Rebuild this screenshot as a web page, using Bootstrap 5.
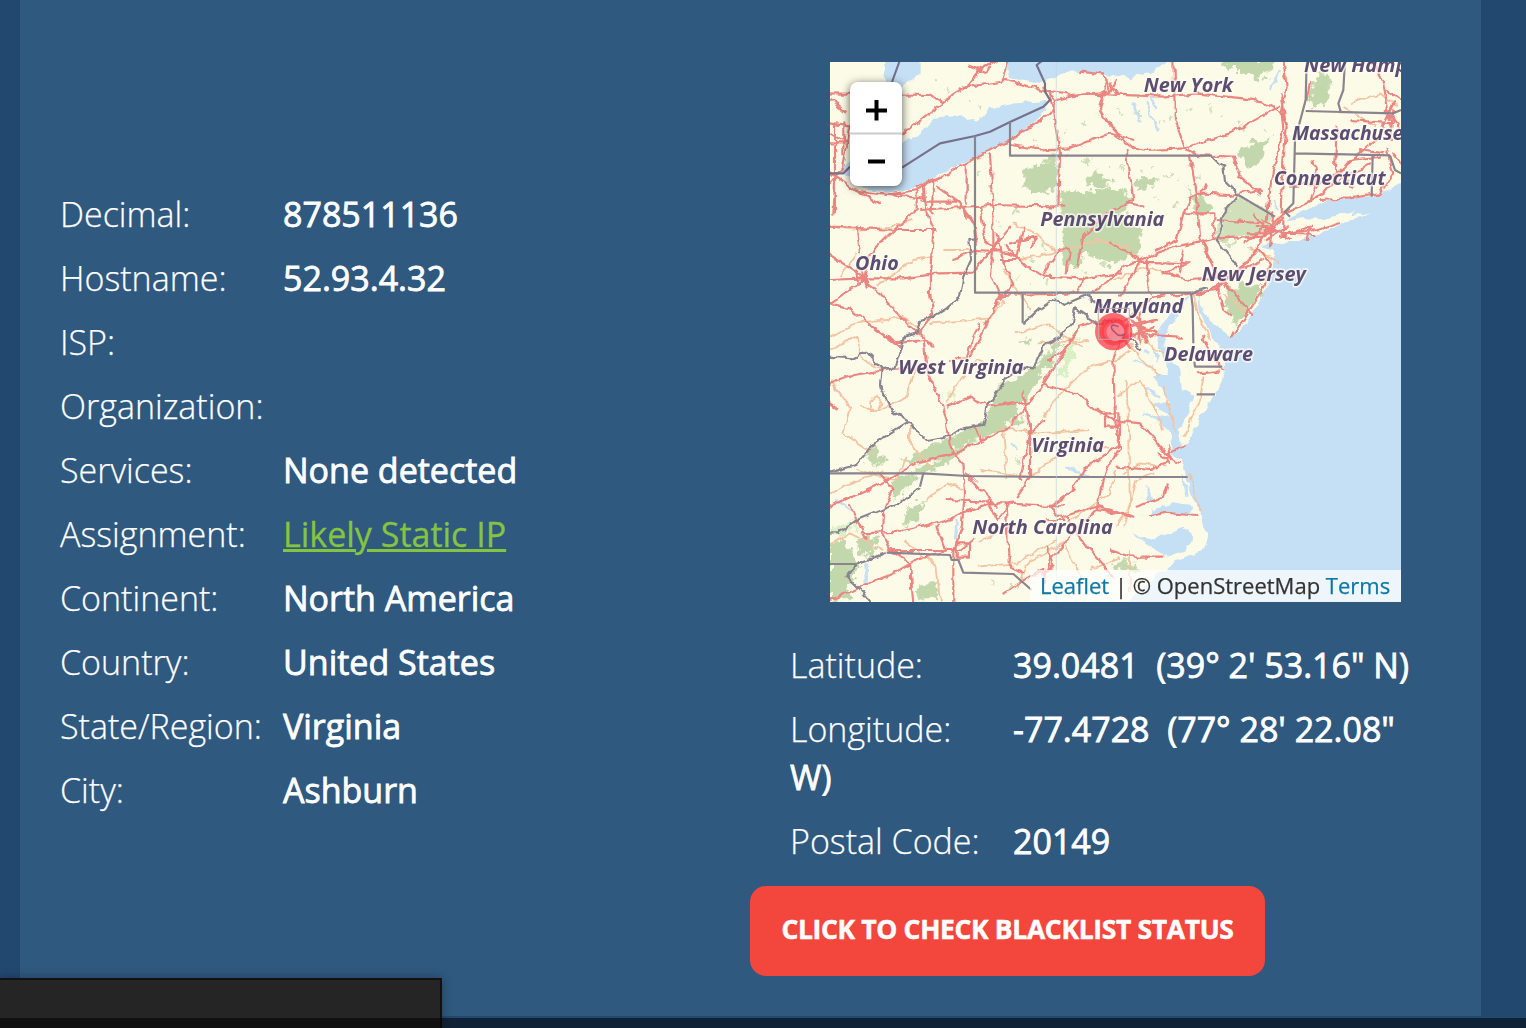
<!DOCTYPE html>
<html lang="en">
<head>
<meta charset="utf-8">
<meta name="viewport" content="width=device-width, initial-scale=1">
<title>IP Details</title>
<link href="https://cdn.jsdelivr.net/npm/bootstrap@5.3.0/dist/css/bootstrap.min.css" rel="stylesheet">
<style>
body{font-family:"Open Sans",sans-serif;background:#234870;color:#fff;width:1526px;height:1028px;overflow:hidden;position:relative}
.panel{width:1461px;height:1016px;margin-left:20px;background:#2f597f}
.facts{width:730px;padding:190px 40px 0}
.geo{width:731px}
.fact{font-size:34px;line-height:48px;margin-bottom:16px;-webkit-text-stroke:.8px currentColor}
.fact>span:first-child{display:inline-block;width:223px;font-weight:300;white-space:nowrap;-webkit-text-stroke-width:.25px}
.fact a{color:#85c441;-webkit-text-stroke-width:.3px}
.mapbox{width:571px;height:540px;margin:62px 80px 39px;position:relative;overflow:hidden;background:#fcfbe7}
.mapbox>svg{display:block;width:571px;height:540px}
.coords{padding:0 40px}
.zoomer{position:absolute;left:20px;top:20px;width:52px;height:104px;border-radius:8px;background:#fff;box-shadow:0 2px 10px rgba(0,0,0,.65)}
.zoomer svg{display:block}
.credit{position:absolute;right:0;bottom:0;width:371px;height:32px;padding-left:10px;background:rgba(255,255,255,.7);color:#333;font-size:22px;line-height:30px;white-space:nowrap;-webkit-text-stroke:.25px currentColor}
.credit a{color:#0f78a4;text-decoration:none}
.btn.check{width:515px;height:90px;border-radius:16px;background:#f3463d;color:#fff;border:0;font-size:26.5px;font-weight:700;padding:0 0 2px;margin-top:5px;white-space:nowrap;letter-spacing:-.35px;-webkit-text-stroke:.5px #fff}
.tray{position:absolute;left:-2px;top:978px;width:444px;height:60px;background:#252525;border:2px solid #111;box-shadow:0 0 10px rgba(0,0,0,.3)}
.footbar{position:absolute;left:0;top:1018px;width:1526px;height:10px;background:rgba(0,0,0,.52)}
.lb{font:italic 700 61px "Open Sans",sans-serif;fill:#5d4e72;stroke:#fffdf6;stroke-width:10px;stroke-linejoin:round;stroke-opacity:.7;paint-order:stroke}
.wt{fill:#c5dff4}
.ld{fill:#fcfbe7}
.gr{fill:#c3d7ac}
.rd{fill:none;stroke:#ea8581;stroke-width:6.5;stroke-linejoin:round;stroke-linecap:round}
.mn{fill:none;stroke:#f3c3a2;stroke-width:5.5;stroke-linejoin:round}
.bd{fill:none;stroke:#8b8490;stroke-width:6.5;stroke-linejoin:round}
</style>
</head>
<body>
<div class="panel d-flex">
  <div class="facts">
    <div class="fact"><span>Decimal:</span><span>878511136</span></div>
    <div class="fact"><span>Hostname:</span><span>52.93.4.32</span></div>
    <div class="fact"><span>ISP:</span></div>
    <div class="fact"><span>Organization:</span></div>
    <div class="fact"><span>Services:</span><span>None detected</span></div>
    <div class="fact"><span>Assignment:</span><a href="#">Likely Static IP</a></div>
    <div class="fact"><span>Continent:</span><span>North America</span></div>
    <div class="fact"><span>Country:</span><span>United States</span></div>
    <div class="fact"><span>State/Region:</span><span>Virginia</span></div>
    <div class="fact"><span>City:</span><span>Ashburn</span></div>
  </div>
  <div class="geo">
    <div class="mapbox">
      <svg viewBox="0 6 1713 1620" preserveAspectRatio="none">
        <defs>
          <filter id="rough" x="0" y="0" width="1740" height="1640" filterUnits="userSpaceOnUse"><feTurbulence type="fractalNoise" baseFrequency=".035" numOctaves="2" seed="4"/><feDisplacementMap in="SourceGraphic" scale="20" xChannelSelector="R" yChannelSelector="G"/><feGaussianBlur stdDeviation="1.9"/></filter>
          <filter id="ragged" x="0" y="0" width="1740" height="1640" filterUnits="userSpaceOnUse"><feTurbulence type="fractalNoise" baseFrequency=".04" numOctaves="4" seed="9"/><feDisplacementMap in="SourceGraphic" scale="48" xChannelSelector="R" yChannelSelector="G"/><feGaussianBlur stdDeviation="2"/></filter>
          <filter id="soft" x="0" y="0" width="1740" height="1640" filterUnits="userSpaceOnUse"><feGaussianBlur stdDeviation="1.6"/></filter>
        </defs>
        <!-- forests -->
        <g class="gr" filter="url(#ragged)">
          <path d="M600 320L645 315 650 290 680 290 685 375 650 405 620 390 580 390 585 345Z"/>
          <path d="M692 385L780 395 870 385 900 430 880 470 940 520 925 580 840 615 770 580 740 620 695 610 700 500 692 450Z"/>
          <path d="M760 350L790 350 805 320 815 350 845 365 830 385 770 380Z"/>
          <path d="M1180 0L1345 0 1330 35 1275 60 1240 30 1190 30ZM1450 60L1480 30 1505 60 1480 130 1440 150ZM1230 265L1320 230 1300 290 1260 330 1230 290ZM910 370L970 350 980 370 920 390ZM1090 400L1150 440 1130 460 1085 455Z"/>
          <path opacity=".75" d="M1225 410L1320 455 1330 500 1270 530 1165 545 1170 470Z"/>
          <path d="M1190 680L1290 670 1300 700 1260 740 1220 800 1190 740Z"/>
          <path d="M700 825L640 890 580 940 510 975 465 1080 410 1110 340 1140 210 1205 240 1215 340 1190 250 1235 280 1240 360 1200 380 1175 440 1140 520 1110 560 1050 590 1010 630 950 680 880Z"/>
          <path d="M110 1200L125 1155 150 1190 180 1200 130 1220ZM190 1260L270 1230 200 1320 180 1310ZM230 1350L290 1320 270 1370 220 1400ZM80 1440L150 1430 120 1490 90 1480ZM0 1450L40 1440 90 1520 50 1570 70 1620 0 1620ZM260 1580L320 1560 325 1620 270 1620ZM540 1080L590 1070 560 1100ZM570 840L600 835 595 860ZM850 1500L930 1515 910 1530 850 1530Z"/>
          <path fill="#d9efc4" d="M685 960L720 850 745 830 710 940ZM350 990L385 1010 370 1030ZM0 1400L80 1385 70 1420 0 1425Z"/>
        </g>
        <!-- small woods scattered over the hills -->
        <path filter="url(#ragged)" fill="none" stroke="#c3d7ac" stroke-width="10" stroke-dasharray="9 46 16 60 5 33" opacity=".75" d="M300 60L480 150 450 190M700 210L900 150 1000 180 1120 130 1240 200 1380 240M570 200L640 270 900 330 1060 360 1150 350M650 560L560 650 630 680 760 640 900 590 1000 560M960 320L1100 390 1040 440 960 410M1200 550L1270 570M500 490L600 430M440 340L520 430M560 1200L720 1120M480 1570L550 1580"/>
        <!-- lakes and sea -->
        <g filter="url(#rough)">
          <path class="wt" d="M162 -20L275 -20 275 40 230 70 185 100 165 80Z"/>
          <path class="wt" d="M30 335L60 300 80 255 250 240 310 180 355 165 400 170 445 185 480 145 560 130 660 122 650 150 620 180 540 240 480 270 410 305 330 340 270 380 170 400 110 385 60 350Z"/>
          <path class="wt" d="M525 -20L1045 -20 970 35 900 55 850 45 760 35 700 40 620 70 540 55Z"/>
          <path class="wt" d="M1740 350L1690 385 1630 410 1540 418 1480 425 1430 450 1385 470 1350 500 1300 560 1330 575 1325 625 1310 680 1280 740 1240 800 1200 835 1180 810 1140 780 1110 735 1102 690 1105 740 1130 800 1145 830 1170 860 1185 915 1175 965 1140 1025 1105 1085 1075 1145 1052 1158 1050 1110 1075 1055 1090 1005 1055 985 1050 925 1020 895 1000 855 1020 795 1060 745 1080 700 1040 740 1010 775 980 820 990 860 1000 895 1015 945 970 945 1020 1025 960 1035 1020 1065 970 1075 1020 1115 1025 1185 1055 1195 1065 1235 1080 1295 1115 1365 1130 1435 1120 1470 1040 1505 980 1545 940 1585 870 1640 1740 1640Z"/>
          <path class="wt" d="M960 1350L1030 1330 1090 1340 1080 1365 1010 1350 960 1370ZM905 1420L960 1440 1060 1400 1090 1430 1070 1470 1010 1490 940 1445ZM1050 1230L1080 1310 1065 1310ZM950 1270L975 1330 950 1320ZM970 860L990 890 980 910Z"/>
          <path class="ld" d="M1340 520L1365 485 1420 475 1480 478 1530 465 1575 450 1560 470 1620 457 1540 492 1460 522 1400 545 1310 550Z"/>
          <path fill="none" stroke="#c5dff4" stroke-width="7" d="M910 130L930 190M950 120L960 170 990 210M960 100L980 150M1350 30L1320 90M1330 420L1340 450M960 880L940 870M970 920L910 900M990 1010L940 980M990 1080L940 1060M15 980L30 1000M20 1320L60 1350M380 1380L375 1440M545 1150L565 1170M700 1220L780 1250M110 1510L110 1570M410 350L410 400"/>
        </g>
        <!-- minor roads -->
        <g class="mn" filter="url(#rough)">
          <path d="M0 500L80 510 180 500 250 480M140 680L250 600 310 590M300 790L480 775 520 720M0 830L80 790 220 770 260 800M30 650L80 580M550 490L620 520 680 580M560 600L660 580 800 540 900 560M340 570L420 570M520 630L600 750M560 820L650 790 700 830 760 860"/>
          <path d="M0 870L80 830 100 900 150 930M0 960L60 1040 40 1120 130 1180M90 1040L150 1050 230 1010 260 910M120 1030L140 1010 155 1030 145 1050 120 1050ZM350 1030L390 960 440 900 520 930M240 1090L240 1150 300 1220M500 1100L620 1120 780 1110M520 1110L530 1260M640 1070L700 990 780 920 860 900 900 870M450 1230L600 1250 690 1180 840 1160M80 1230L200 1260 230 1190M0 1300L160 1230M290 1320L350 1270 400 1290M440 1520L560 1510 680 1440M440 1450L500 1420M560 1590L600 1500 700 1450 760 1560M0 1450L60 1420 160 1470M220 1440L320 1520 330 1626M700 1400L840 1300 860 1230M780 1530L870 1490M620 850L780 840"/>
          <path d="M860 1010L930 960 980 1060 1000 1110M890 960L900 1340 860 1400M880 1240L930 1210 1010 1220M880 1400L920 1260 970 1240M900 1470L900 1590M1000 980L1040 1120M1090 700L1110 780 1140 840M1100 940L1170 930M1120 950L1110 1020 1060 1130M1080 1240L1110 1350M1180 700L1250 760M900 820L1000 880M900 850L940 900 990 950M1560 130L1650 100 1700 140M1540 140L1640 200M1260 560L1350 610M850 660L950 620 1040 650"/>
        </g>
        <!-- main roads -->
        <g class="rd" filter="url(#rough)">
          <path d="M-10 100L300 105 340 125 410 80 450 30 500 0M220 220L340 125M400 80L530 60 650 95 720 105 840 95 860 60M420 20L470 40 480 20M540 0L520 60M750 32L820 40 840 90M830 60L810 150 830 185 870 220M0 190L60 200 40 320 0 370M0 220L50 250 0 250M15 190L15 460M0 120L50 160M40 190L40 280"/>
          <path d="M0 340L70 390 170 405 260 390 410 310 540 240 660 160 680 120 640 80M15 370L10 470M60 385L150 430M80 395L280 415M260 385L260 450 120 580 100 660M280 370L290 460 310 510 300 640 300 700 310 760 260 825M310 360L305 460M260 380L330 350M270 450L480 435 700 440M280 425L380 425 430 480 440 580M410 310L410 430M480 285L490 430 490 560M660 100L690 280 685 440M540 255L630 268 720 265 840 220 910 240M450 435L465 540 500 570 560 590M0 500L200 510 320 510M320 380L390 430 410 470"/>
          <path d="M0 660L100 655 220 655 330 640 430 638 480 570 540 500M80 500L90 580M85 640L120 670M90 670L110 645M100 660L0 730 60 745 130 800 210 860M0 585L100 650M100 660L150 700 240 800 310 860M370 600L440 570 530 575 570 600M490 570L480 640 510 710 450 830 420 890M500 520L530 630 550 670 510 720M530 560L590 620 640 650 760 655 870 640M540 550L620 530 600 560M510 600L560 600 580 500M640 640L690 570 720 565 710 640M760 650L740 700 510 705"/>
          <path d="M680 120L760 100 1000 110 1100 100 1240 115 1300 125 1355 160M1030 0L1035 180 1065 265M840 220L900 260 950 270 1060 265 1200 220 1350 140M890 270L910 420 890 430M1060 265L1100 285 1210 290 1230 350 1290 400M1360 0L1370 80 1355 160 1360 210 1325 350 1310 480M1355 160L1370 200 1360 300 1355 460M1355 100L1365 180M840 190L880 240M840 70L860 100"/>
          <path d="M740 620L760 530 840 450 900 430 940 440M780 700L830 670 880 620 930 600 1030 560 1160 535 1300 530M840 545L900 580 930 605 870 710M930 605L1080 610 1000 640 1080 660 1200 650M1080 285L1100 400 1110 530 1150 610M1100 400L1200 405 1290 390M1060 460L1150 460 1150 540M1060 460L1080 420 1120 390 1125 370M1060 460L1040 540 980 570M1160 480L1300 490M1110 530L1160 650M950 600L960 700M1050 640L1060 570"/>
          <path d="M840 840L850 790 890 780 970 710 1060 700 1160 690 1200 650 1250 610 1285 560 1310 510 1360 460 1430 430 1480 400 1560 300 1650 290M1100 705L1180 670M1180 670L1150 630M1180 670L1210 700 1270 765M1280 560L1320 610 1300 680 1240 780 1200 835M1160 680L1180 750 1200 765M1230 630L1300 600"/>
          <path d="M1360 470L1320 520 1250 520M1360 480L1360 520 1460 510 1530 490M1300 480L1380 540M1310 540L1370 500M1330 460L1320 560M1280 500L1360 520 1460 525M1290 540L1350 480M1240 550L1310 500M1350 530L1440 500 1430 540M1270 460L1310 510"/>
          <path d="M1520 200L1515 330 1570 380M1620 0L1660 70 1680 180M1560 180L1690 190M1690 130L1640 240 1520 340 1460 380M1470 420L1560 415 1650 400 1690 340 1670 270M1590 270L1660 280M1500 380L1620 310M1450 300L1460 360 1440 420M1380 380L1470 365M1670 90L1713 120M1670 150L1713 210M1690 150L1680 240M1690 280L1713 310M1440 70L1430 120"/>
          <path d="M-10 975L70 945 200 925 280 930M280 830L290 930 330 1020 350 1080 360 1160 400 1210 405 1300 395 1400 370 1480 370 1636M350 1040L420 1010 480 1040 560 1025 590 1040 540 1100 440 1150 380 1180 260 1210 150 1270 -10 1345M120 795L200 850 280 840M0 1030L20 1045M640 975L740 1000 800 1050 850 1080M660 900L700 870 750 800 800 780M590 1040L640 970 730 830M360 900L410 895 430 830 450 790M580 1000L600 1100 600 1250 560 1310M440 1100L460 1150M150 1240L190 1290 160 1350 155 1420 180 1470 350 1470M95 1420L210 1415 340 1385 420 1350 480 1330 530 1330 700 1340M60 1335L110 1440M350 1320L480 1325M410 1240L500 1340M530 1330L540 1520 580 1540M320 1400L345 1470 390 1470 430 1440M180 1470L240 1510 240 1590M0 1620L190 1540 260 1500 350 1470M570 1260L600 1120 640 1080M650 1460L670 1510 640 1540M240 1510L250 1636"/>
          <path d="M850 900L855 1080 870 1160 820 1250 800 1350 730 1420 660 1500 640 1570M870 1090L870 1150 760 1230 730 1290 660 1340M700 1370L800 1340 910 1370M850 1080L930 1090 980 1145 1020 1200M800 1350L870 1360 900 1370M710 1370L760 1450 850 1550M520 1600L600 1550 640 1530M850 895L870 850 900 830M960 825L1050 830M1010 1180L1040 1170 1060 1155M1000 1190L1050 1205M860 1220L960 1230 1010 1210M1010 1270L1000 1310 920 1340M960 1365L1010 1355 1100 1365M840 1470L900 1490 1000 1490M1120 830L1140 880 1180 930M1100 940L1170 935"/>
          <path d="M80 630L80 670M95 630L110 680M380 1450L420 1450 420 1490 380 1490ZM470 1320L500 1380 540 1330M660 1340L700 1380 650 1380M825 1060L865 1060 865 1100 825 1100ZM990 1180L1020 1215M1015 1160L1020 1200M510 540L470 590M400 440L430 490"/>
          <path d="M910 790L980 820M920 770L950 850M890 800L980 780M880 840L970 800M930 760L930 850M900 780L960 830M870 820L900 860" stroke-width="8"/>
        </g>
        <!-- state and national borders -->
        <g class="bd">
          <g filter="url(#soft)">
            <path d="M210 0L186 66M640 0L620 15 645 70 645 95 660 120 640 140 540 186 480 215 435 228 330 250 216 323M60 320L40 340 0 340" stroke="#77718a"/>
            <path d="M435 228V698H1083M540 186V287H1145M578 702V790M1083 698L1088 740 1090 850M1093 905L1095 920H1177M1100 1003H1155M1430 0L1427 120 1395 240 1390 430 1365 455 1380 470M1427 153L1690 160 1713 150M1545 0L1540 90 1525 130 1532 155M1395 280L1680 286M1628 286L1625 410M1680 286L1695 330 1713 340"/>
            <path d="M1225 405L1335 470M0 1240L280 1240 410 1248 640 1251H1073M280 1240L270 1280M0 1512L80 1512M170 1478L360 1485 365 1500 385 1500 400 1538 550 1542 605 1590"/>
          </g>
          <g filter="url(#rough)"><path d="M1145 287L1180 320 1185 365 1225 405 1170 475 1180 500 1160 540 1225 620M1083 700L1130 680M435 538L418 540 423 600 400 650 390 710 350 745 310 770 270 780 260 820 225 830 205 900 195 925 155 930 110 875 70 895 -10 890M155 930L150 975 190 1055 235 1085 290 1140 370 1125 400 1105 460 1095 475 1030 530 955 580 920 610 925 640 860 690 830 725 790 735 745 800 790 840 780 880 840 910 840 930 870M235 1085L130 1150 80 1215 -10 1240M580 790L630 745 675 715 700 735 770 705 820 740M270 1280L220 1325 155 1350 80 1380 20 1420 -10 1420M170 1478L80 1510 50 1550 100 1600 130 1636"/></g>
        </g>
        <path d="M679 6V1626" stroke="#b9d6df" stroke-width="2"/>
        <!-- place names -->
        <g filter="url(#soft)">
          <text class="lb" x="941" y="96" textLength="268" lengthAdjust="spacingAndGlyphs">New York</text>
          <text class="lb" x="1422" y="37" textLength="310" lengthAdjust="spacingAndGlyphs">New Hamp</text>
          <text class="lb" x="1386" y="239" textLength="334" lengthAdjust="spacingAndGlyphs">Massachuse</text>
          <text class="lb" x="1331" y="374" textLength="336" lengthAdjust="spacingAndGlyphs">Connecticut</text>
          <text class="lb" x="631" y="499" textLength="372" lengthAdjust="spacingAndGlyphs">Pennsylvania</text>
          <text class="lb" x="75" y="631" textLength="131" lengthAdjust="spacingAndGlyphs">Ohio</text>
          <text class="lb" x="1115" y="662" textLength="313" lengthAdjust="spacingAndGlyphs">New Jersey</text>
          <text class="lb" x="791" y="758" textLength="269" lengthAdjust="spacingAndGlyphs">Maryland</text>
          <text class="lb" x="1002" y="903" textLength="267" lengthAdjust="spacingAndGlyphs">Delaware</text>
          <text class="lb" x="205" y="941" textLength="375" lengthAdjust="spacingAndGlyphs">West Virginia</text>
          <text class="lb" x="604" y="1176" textLength="218" lengthAdjust="spacingAndGlyphs">Virginia</text>
          <text class="lb" x="427" y="1421" textLength="422" lengthAdjust="spacingAndGlyphs">North Carolina</text>
        </g>
        <circle cx="851" cy="815" r="56" fill="#ff3b48" fill-opacity=".75"/>
        <circle cx="851" cy="815" r="36" fill="#ff2637" fill-opacity=".3" stroke="#f92f42" stroke-opacity=".5" stroke-width="12"/>
        <circle cx="856" cy="816" r="27" fill="#f9a0ad" fill-opacity=".7"/>
        <path d="M866 800Q838 788 846 808L862 824Q874 830 884 822" fill="none" stroke="#9b4865" stroke-opacity=".8" stroke-width="5"/>
        <path d="M805 745H898V838H805Z" fill="none" stroke="#c3a7aa" stroke-width="3"/>
      </svg>
      <div class="zoomer">
        <svg width="52" height="104" viewBox="0 0 52 104"><path d="M0 51.5H52" stroke="#ccc" stroke-width="2"/><path d="M16 28.5H37M26.5 18V38.5M18 79.5H35" stroke="#000" stroke-width="4"/></svg>
      </div>
      <div class="credit"><a href="#">Leaflet</a> | © OpenStreetMap <a href="#">Terms</a></div>
    </div>
    <div class="coords">
      <div class="fact"><span>Latitude:</span><span>39.0481&nbsp; (39° 2' 53.16" N)</span></div>
      <div class="fact"><span>Longitude:</span><span>-77.4728&nbsp; (77° 28' 22.08" W)</span></div>
      <div class="fact"><span>Postal Code:</span><span>20149</span></div>
    </div>
    <button type="button" class="btn check">CLICK TO CHECK BLACKLIST STATUS</button>
  </div>
</div>
<div class="tray"></div>
<div class="footbar"></div>
<script src="https://cdn.jsdelivr.net/npm/bootstrap@5.3.0/dist/js/bootstrap.bundle.min.js"></script>
</body>
</html>
